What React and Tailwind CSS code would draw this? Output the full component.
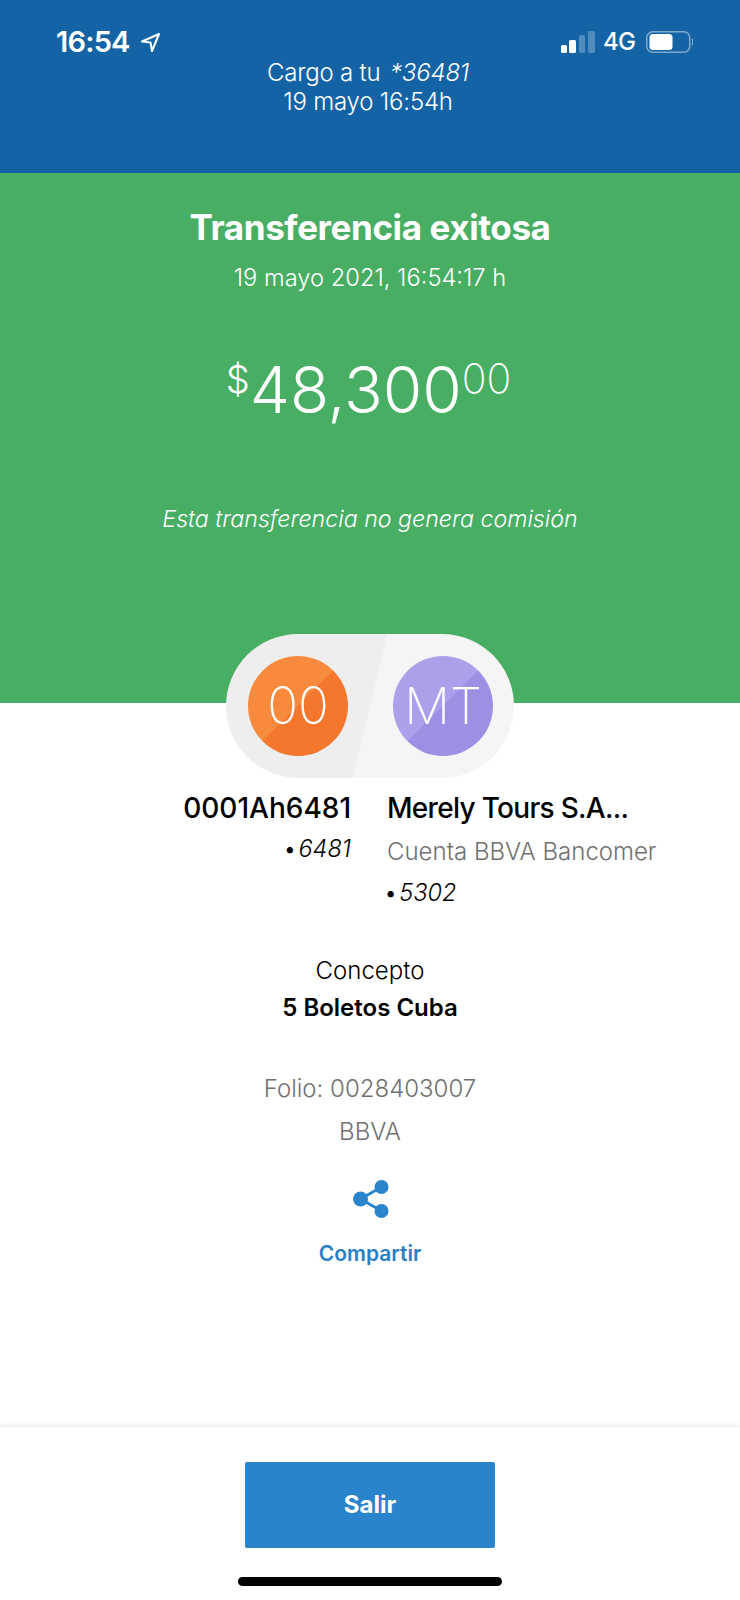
import React from "react";

function LocationArrow() {
  return (
    <svg width="21" height="21" viewBox="0 0 21 21" fill="none" stroke="white" strokeWidth="2" strokeLinejoin="round">
      <path d="M19 2 L2 9.5 L10.5 10.5 L12 19 Z" />
    </svg>
  );
}

function StatusRight() {
  return (
    <div className="flex items-center">
      <svg width="34" height="22" viewBox="0 0 34 22" fill="white">
        <rect x="0" y="14" width="6" height="8" rx="1.5" />
        <rect x="8" y="9" width="7" height="13" rx="1.5" />
        <rect x="18" y="4" width="6" height="18" rx="1.5" opacity="0.25" />
        <rect x="27" y="0" width="7" height="22" rx="1.5" opacity="0.25" />
      </svg>
      <span className="ml-[8px] w-[35px] text-[24px] leading-[30px] font-medium tracking-[-0.7px] text-white">4G</span>
      <svg className="ml-[8px]" width="47" height="22" viewBox="0 0 47 22" fill="none">
        <rect x="0.75" y="0.75" width="43" height="20.5" rx="6" stroke="white" strokeOpacity="0.45" strokeWidth="1.5" />
        <rect x="3.5" y="3" width="23" height="16" rx="3.5" fill="white" />
        <path d="M46 8 C47 9.5 47 12.5 46 14" stroke="white" strokeOpacity="0.45" strokeWidth="1.5" />
      </svg>
    </div>
  );
}

function ShareIcon() {
  return (
    <svg width="36" height="38" viewBox="0 0 36 38" fill="#2a84cc">
      <circle cx="7.5" cy="19" r="7.5" />
      <circle cx="28.5" cy="7" r="7" />
      <circle cx="28.5" cy="31" r="7" />
      <path d="M7.5 19 L28.5 7 M7.5 19 L28.5 31" stroke="#2a84cc" strokeWidth="3" />
    </svg>
  );
}

function Avatar({ label, className }) {
  return (
    <div className={`flex h-[100px] w-[100px] items-center justify-center rounded-full text-[51px] font-extralight text-white ${className}`}>
      {label}
    </div>
  );
}

function AccountTail({ digits }) {
  return (
    <p className="text-[23.5px] leading-[30px] font-light italic">
      <span className="mr-[2px] not-italic">•</span>
      {digits}
    </p>
  );
}

export default function App() {
  return (
    <div className="relative flex h-[1600px] w-[740px] flex-col overflow-hidden bg-white font-['Inter','Liberation_Sans',sans-serif]">
      {/* Cabecera azul con la barra de estado */}
      <header className="h-[173px] bg-[#1464a5] pt-[27px] text-white">
        <div className="flex h-[30px] items-center justify-between pl-[56px] pr-[47px]">
          <div className="flex items-center gap-[10px]">
            <span className="text-[29px] leading-[30px] font-semibold tracking-[-0.8px]">16:54</span>
            <LocationArrow />
          </div>
          <StatusRight />
        </div>
        <div className="mt-[1px] pr-[4px] text-center text-[24px] leading-[29px] font-light tracking-[-0.2px]">
          <p>Cargo a tu <em className="ml-[3px]">*36481</em></p>
          <p>19 mayo 16:54h</p>
        </div>
      </header>

      {/* Resultado de la operación */}
      <section className="flex h-[530px] flex-col items-center bg-[#48ae64] text-white">
        <h1 className="mt-[33px] text-[35px] leading-[42px] font-bold tracking-[-0.4px]">Transferencia exitosa</h1>
        <p className="mt-[15px] text-[23.7px] leading-[30px] font-light">19 mayo 2021, 16:54:17 h</p>
        <div className="mt-[57px] flex h-[80px] items-start pr-[3px] font-light">
          <span className="mt-[7px] text-[38px] leading-[44px]">$</span>
          <span className="text-[64px] leading-[80px]">48,300</span>
          <span className="mt-[6px] text-[41px] leading-[44px] font-extralight">00</span>
        </div>
        <p className="mt-[73px] text-[23.2px] leading-[32px] font-light italic">Esta transferencia no genera comisión</p>
      </section>

      {/* Origen y destino */}
      <div className="relative -mt-[69px] flex h-[144px] w-[288px] items-center self-center rounded-full bg-[linear-gradient(103.7deg,#eeeeee_50%,#f5f5f5_50%)] pl-[22px]">
        <Avatar label="00" className="bg-[linear-gradient(135deg,#f88a3e_50%,#f5762d_50%)]" />
        <Avatar label="MT" className="ml-[45px] bg-[linear-gradient(135deg,#ada0ea_50%,#9d8fe3_50%)]" />
      </div>

      <div className="mt-[12px] flex h-[140px] text-black">
        <div className="flex w-[351px] flex-col items-end">
          <p className="text-[28px] leading-[36px] font-medium">0001Ah6481</p>
          <div className="mt-[8px]"><AccountTail digits="6481" /></div>
        </div>
        <div className="ml-[36px] flex flex-col items-start">
          <p className="text-[28px] leading-[36px] font-medium tracking-[-0.7px]">Merely Tours S.A...</p>
          <p className="mt-[11px] text-[24px] leading-[30px] font-light text-[#707070]">Cuenta BBVA Bancomer</p>
          <div className="mt-[11px] -ml-[3px]"><AccountTail digits="5302" /></div>
        </div>
      </div>

      <div className="mt-[23px] flex flex-col items-center">
        <p className="text-[24px] leading-[36px] font-light text-black">Concepto</p>
        <p className="mt-[1px] text-[24px] leading-[36px] font-semibold text-black">5 Boletos Cuba</p>
        <p className="mt-[45px] text-[24px] leading-[36px] font-light text-[#707070]">Folio: 0028403007</p>
        <p className="mt-[7px] text-[24px] leading-[36px] font-light text-[#707070]">BBVA</p>
        <div className="mt-[30px] ml-[1px]"><ShareIcon /></div>
        <p className="mt-[22px] text-[21px] leading-[28px] font-semibold text-[#2a7fc4]">Compartir</p>
      </div>

      {/* Pie con la acción principal */}
      <footer className="absolute inset-x-0 bottom-0 flex h-[173px] flex-col items-center bg-white pt-[35px] shadow-[0_-2px_4px_rgba(0,0,0,0.09)]">
        <button className="flex h-[86px] w-[250px] items-center justify-center rounded-[2px] bg-[#2a84cc] text-[24px] font-bold text-white">
          Salir
        </button>
        <div className="mt-[29px] h-[9px] w-[264px] rounded-full bg-black" />
      </footer>
    </div>
  );
}
